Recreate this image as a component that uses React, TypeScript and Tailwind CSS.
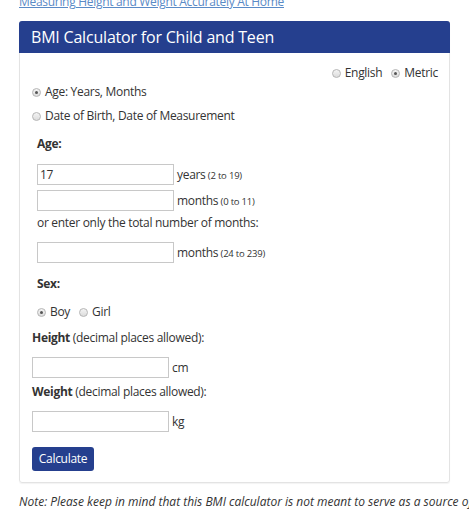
import React from "react";

function Radio({ checked }: { checked?: boolean }) {
  return (
    <span className="inline-flex items-center justify-center w-[9px] h-[9px] rounded-full border border-[#b5b5b5] bg-gradient-to-b from-[#f4f4f4] to-[#dcdcdc] mr-[4px] shrink-0">
      {checked && <span className="w-[3px] h-[3px] rounded-full bg-[#555]" />}
    </span>
  );
}

function Field({ value, unit, range, left = "ml-[17px]" }: { value?: string; unit: string; range?: string; left?: string }) {
  return (
    <div className={`flex items-center ${left}`}>
      <div className="w-[137px] h-[21px] border border-[#c8c8c8] bg-white px-[2px] text-[12px] leading-[19px] text-[#333]">
        {value}
      </div>
      <span className="ml-[3px] text-[12px] text-[#333]">
        {unit}
        {range && <span className="text-[9.5px] tracking-[-0.2px]"> {range}</span>}
      </span>
    </div>
  );
}

export default function App() {
  return (
    <div className="w-[469px] h-[513px] overflow-hidden bg-white text-[#333] tracking-[-0.3px]" style={{ fontFamily: '"Open Sans", sans-serif' }}>
      <div className="pl-[19px] mt-[-12px] h-[33px]">
        <span className="text-[12px] text-[#5a8ac6] underline leading-[16px]">Measuring Height and Weight Accurately At Home</span>
      </div>
      <div className="ml-[19px] w-[431px] border border-[#e3e3e3] rounded-[3px] shadow-[0_1px_1px_rgba(0,0,0,0.05)]">
        <div className="h-[32px] bg-[#253f8e] rounded-t-[3px] -mx-px -mt-px px-[12px] flex items-center">
          <span className="text-white text-[16px] tracking-[-0.2px]">BMI Calculator for Child and Teen</span>
        </div>
        <div className="pb-[11px] text-[12px]">
          <div className="flex justify-end items-center pr-[11px] mt-[12px] h-[16px]">
            <Radio /> <span className="mr-[9px]">English</span>
            <Radio checked /> <span>Metric</span>
          </div>
          <div className="flex items-center ml-[12px] mt-[3px] h-[16px]">
            <Radio checked /> <span>Age: Years, Months</span>
          </div>
          <div className="flex items-center ml-[12px] mt-[8px] h-[16px]">
            <Radio /> <span>Date of Birth, Date of Measurement</span>
          </div>
          <div className="ml-[17px] mt-[11px] h-[16px] font-bold">Age:</div>
          <div className="mt-[13px]">
            <Field value="17" unit="years" range="(2 to 19)" />
          </div>
          <div className="mt-[5px]">
            <Field unit="months" range="(0 to 11)" />
          </div>
          <div className="ml-[17px] mt-[3px] h-[16px]">or enter only the total number of months:</div>
          <div className="mt-[12px]">
            <Field unit="months" range="(24 to 239)" />
          </div>
          <div className="ml-[17px] mt-[12px] h-[16px] font-bold">Sex:</div>
          <div className="flex items-center ml-[17px] mt-[13px] h-[16px]">
            <Radio checked /> <span className="mr-[9px]">Boy</span>
            <Radio /> <span>Girl</span>
          </div>
          <div className="ml-[12px] mt-[9px] h-[16px]">
            <span className="font-bold">Height</span> (decimal places allowed):
          </div>
          <div className="mt-[12px]">
            <Field unit="cm" left="ml-[12px]" />
          </div>
          <div className="ml-[12px] mt-[5px] h-[16px]">
            <span className="font-bold">Weight</span> (decimal places allowed):
          </div>
          <div className="mt-[12px]">
            <Field unit="kg" left="ml-[12px]" />
          </div>
          <div className="ml-[12px] mt-[15px]">
            <div className="inline-flex items-center justify-center w-[62px] h-[24px] bg-[#253f8e] rounded-[3px] text-white text-[12px]">
              Calculate
            </div>
          </div>
        </div>
      </div>
      <div className="pl-[19px] mt-[10px] text-[12px] tracking-normal italic whitespace-nowrap">
        Note: Please keep in mind that this BMI calculator is not meant to serve as a source of clinical guidance
      </div>
    </div>
  );
}
